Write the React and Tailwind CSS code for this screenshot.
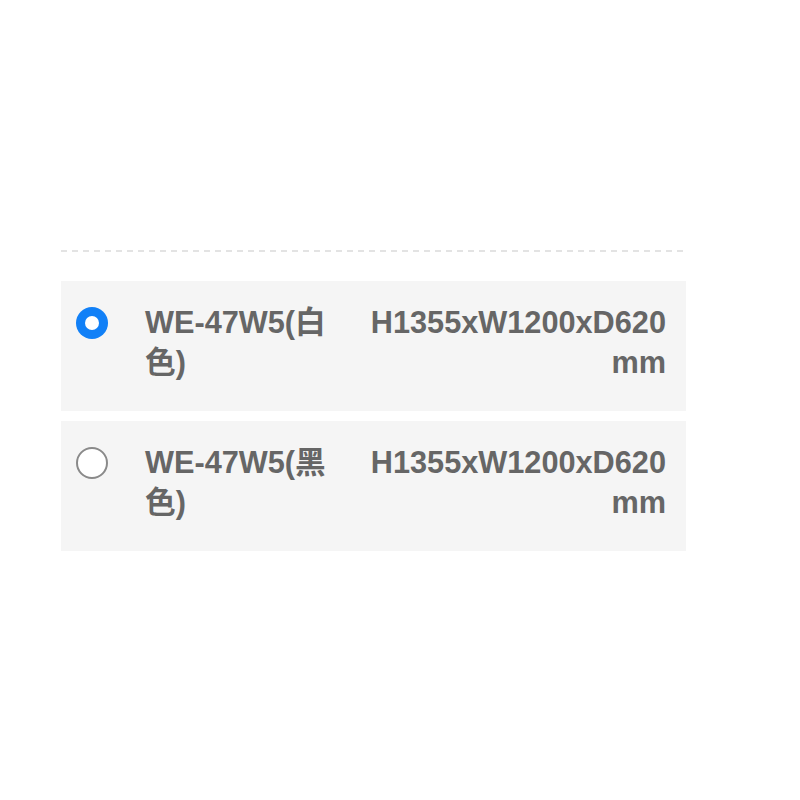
import { useState } from "react";

const options = [
    { id: "white", name: "WE-47W5(白色)", size: "H1355xW1200xD620 mm" },
    { id: "black", name: "WE-47W5(黑色)", size: "H1355xW1200xD620 mm" },
];

export default function App() {
    const [selected, setSelected] = useState("white");

    return (
        <main className="w-full min-h-[800px] bg-white pt-[250px] px-[61px] font-['Liberation_Sans','Noto_Sans_CJK_SC',sans-serif]">
            <div className="w-[625px]">
                <div className="h-[2px] w-full bg-[linear-gradient(to_right,#e3e3e3_6px,transparent_6px)] bg-[length:11px_2px] bg-repeat-x" />
                <div className="flex flex-col gap-[10px] mt-[29px]">
                    {options.map((option) => (
                        <div
                            key={option.id}
                            onClick={() => setSelected(option.id)}
                            className="flex items-start bg-[#f5f5f5] pl-[15px] pr-[20px] pt-[22px] pb-[28px] cursor-pointer"
                        >
                            <div className="mt-[4px] shrink-0">
                                {selected === option.id ? (
                                    <div className="w-[32px] h-[32px] rounded-full bg-[#1180f7] flex items-center justify-center">
                                        <div className="w-[14px] h-[14px] rounded-full bg-white" />
                                    </div>
                                ) : (
                                    <div className="w-[32px] h-[32px] rounded-full border-2 border-[#8a8a8a] bg-white" />
                                )}
                            </div>
                            <div className="ml-[37px] w-[200px] shrink-0 text-[30.7px] leading-[40px] font-bold text-[#666666]">
                                {option.name}
                            </div>
                            <div className="flex-1 text-right text-[30.7px] leading-[40px] font-bold text-[#666666]">
                                {option.size}
                            </div>
                        </div>
                    ))}
                </div>
            </div>
        </main>
    );
}
